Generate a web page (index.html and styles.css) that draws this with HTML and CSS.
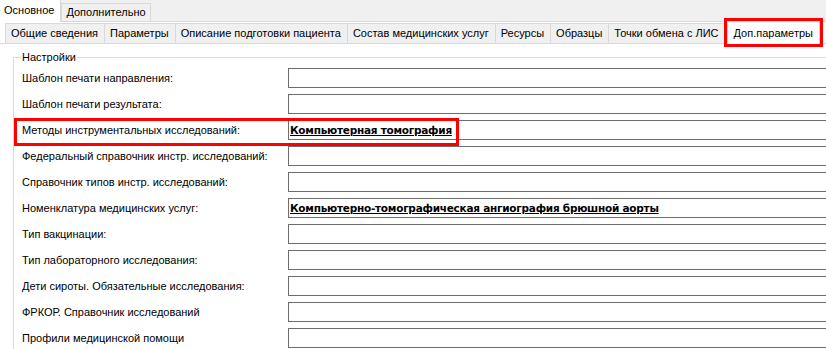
FILE: index.html
```html
<!DOCTYPE html>
<html lang="ru">
<head>
    <meta charset="UTF-8">
    <title>Доп.параметры</title>
    <link rel="stylesheet" href="styles.css">
</head>
<body>

<div class="tabs tabs-main">
    <div class="tab active">Основное</div>
    <div class="tab">Дополнительно</div>
</div>

<div class="main-page">
    <div class="tabs tabs-sub">
        <div class="tab">Общие сведения</div>
        <div class="tab">Параметры</div>
        <div class="tab">Описание подготовки пациента</div>
        <div class="tab">Состав медицинских услуг</div>
        <div class="tab">Ресурсы</div>
        <div class="tab">Образцы</div>
        <div class="tab">Точки обмена с ЛИС</div>
        <div class="tab active marked">Доп.параметры</div>
    </div>

    <div class="sub-page">
        <fieldset class="group">
            <legend>Настройки</legend>
            <div class="row"><span class="label">Шаблон печати направления:</span><div class="field"></div></div>
            <div class="row"><span class="label">Шаблон печати результата:</span><div class="field"></div></div>
            <div class="row">
                <span class="label">Методы инструментальных исследований:</span>
                <div class="field"><span class="value">Компьютерная томография</span></div>
                <span class="highlight"></span>
            </div>
            <div class="row"><span class="label">Федеральный справочник инстр. исследований:</span><div class="field"></div></div>
            <div class="row"><span class="label">Справочник типов инстр. исследований:</span><div class="field"></div></div>
            <div class="row"><span class="label">Номенклатура медицинских услуг:</span><div class="field"><span class="value">Компьютерно-томографическая ангиография брюшной аорты</span></div></div>
            <div class="row"><span class="label">Тип вакцинации:</span><div class="field"></div></div>
            <div class="row"><span class="label">Тип лабораторного исследования:</span><div class="field"></div></div>
            <div class="row"><span class="label">Дети сироты. Обязательные исследования:</span><div class="field"></div></div>
            <div class="row"><span class="label">ФРКОР. Справочник исследований</span><div class="field"></div></div>
            <div class="row"><span class="label">Профили медицинской помощи</span><div class="field"></div></div>
        </fieldset>
    </div>
</div>

</body>
</html>
```

FILE: styles.css
```css
body {
    margin: 0;
    width: 826px;
    height: 349px;
    overflow: hidden;
    background-color: #fff;
    font-family: "Liberation Sans", Arial, sans-serif;
    font-size: 11px;
    color: #000;
}
.tabs {
    display: flex;
    align-items: flex-end;
}
.tab {
    box-sizing: border-box;
    white-space: nowrap;
    background-color: #f0f0f0;
    border: 1px solid #d9d9d9;
    border-bottom: none;
}
.tabs-main {
    height: 21px;
    background-color: #f0f0f0;
    border-bottom: 1px solid #d9d9d9;
}
.tabs-main .tab {
    height: 18px;
    line-height: 17px;
    padding: 0 4px;
}
.tabs-main .tab.active {
    height: 22px;
    line-height: 20px;
    margin-bottom: -1px;
    padding: 0 6px 0 4px;
    background-color: #fff;
    border-left: none;
    border-top: none;
}
.main-page {
    padding-top: 1px;
}
.tabs-sub {
    height: 20px;
    padding-left: 5px;
    border-bottom: 1px solid #d9d9d9;
}
.tabs-sub .tab {
    height: 20px;
    line-height: 19px;
    padding: 0 6px 0 5px;
    margin-right: -1px;
}
.tabs-sub .tab.active {
    height: 23px;
    line-height: 22px;
    margin-left: 2px;
    margin-bottom: -1px;
    padding: 0 6px;
    background-color: #fff;
}
.tabs-sub .tab.marked {
    outline: 3px solid #f00;
}
.sub-page {
    padding-top: 6px;
}
.group {
    margin: 0 -30px 0 13px;
    padding: 4px 0 0 8px;
    border: 1px solid #dcdcdc;
    border-right: none;
    border-bottom: none;
}
.group legend {
    padding: 0 1px;
    margin-left: -1px;
    line-height: 14px;
}
.row {
    position: relative;
    display: flex;
    align-items: center;
    height: 20px;
    margin-bottom: 6px;
}
.label {
    width: 266px;
    flex-shrink: 0;
}
.field {
    box-sizing: border-box;
    flex: 1;
    height: 20px;
    border: 1px solid #6d6d6d;
    border-right: none;
    padding: 2px 0 0 1px;
}
.value {
    font-family: "DejaVu Sans", Verdana, sans-serif;
    font-size: 10.5px;
    font-weight: bold;
    letter-spacing: -0.25px;
    text-decoration: underline;
    line-height: 14px;
}
.highlight {
    position: absolute;
    left: -8px;
    top: -2px;
    width: 439px;
    height: 22px;
    border: 3px solid #f00;
}
```
